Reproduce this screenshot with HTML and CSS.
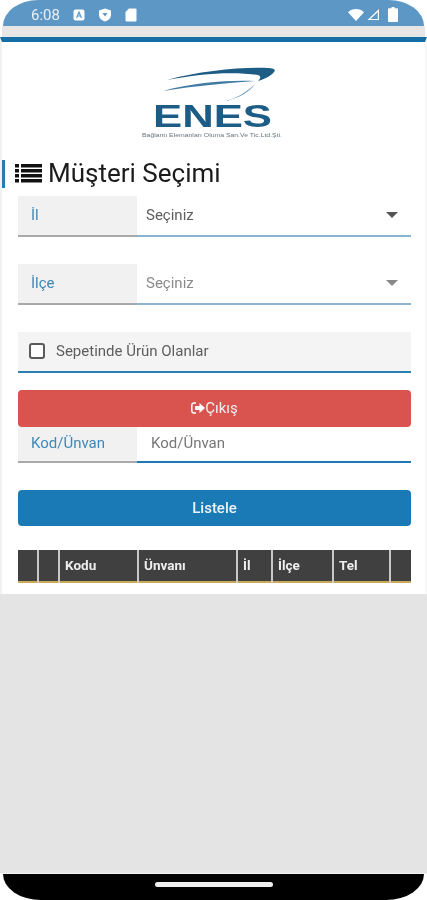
FILE: index.html
```html
<!DOCTYPE html>
<html lang="en">
<head>
    <meta charset="UTF-8">
    <meta name="viewport" content="width=device-width, initial-scale=1.0">
    <title>Müşteri Seçimi</title>
    <link rel="stylesheet" href="styles.css">
</head>
<body>
    <header class="status-bar">
        <span class="clock">6:08</span>
        <svg class="st-icon" width="12" height="12" viewBox="0 0 12 12"><rect x="0.5" y="0.5" width="11" height="11" rx="2" fill="#fff"/><path d="M3.6 9 6 3l2.4 6M4.5 7h3" fill="none" stroke="#5c97c6" stroke-width="1.2"/></svg>
        <svg class="st-icon" width="14" height="14" viewBox="0 0 14 14"><path d="M7 0.5 13 2.5v4.2c0 3.4-2.5 5.8-6 6.8-3.500-1-6-3.400-6-6.800V2.500z" fill="#fff"/><path d="M4.500 5h5L7 8.500z" fill="#5c97c6"/></svg>
        <svg class="st-icon" width="12" height="14" viewBox="0 0 12 14"><path d="M4 0.500h6.500a1 1 0 0 1 1 1v11a1 1 0 0 1-1 1h-9a1 1 0 0 1-1-1V4z" fill="#fff"/></svg>
        <span class="status-right">
            <svg width="16" height="12" viewBox="0 0 16 12"><path d="M0 3.200C4.500-1 11.500-1 16 3.200L8 12z" fill="#fff"/></svg>
            <svg width="14" height="13" viewBox="0 0 14 13"><path d="M13 1v11H1.500zM11.800 4 4.400 11h7.400z" fill="#fff" fill-rule="evenodd"/></svg>
            <svg class="battery" width="10" height="15" viewBox="0 0 10 15"><path d="M3.500 0h3v1.300H9a1 1 0 0 1 1 1V14a1 1 0 0 1-1 1H1a1 1 0 0 1-1-1V2.300a1 1 0 0 1 1-1h2.500z" fill="#fff"/></svg>
        </span>
    </header>
    <div class="app-strip"></div>

    <main class="content">
        <div class="logo">
            <svg width="146" height="74" viewBox="0 0 146 74">
                <path d="M27 15C60 6 100 2 128 3c6 0 8 2 6 4-3 4-9 7-16 9 3-3 3-5 0-6C90 6 60 9 27 15z" fill="#1d5c85"/>
                <path d="M23 26C55 17 90 15 115 16 85 18 55 21 23 26z" fill="#3f7ba3"/>
                <path d="M85 36c12-3 22-9 30-17-5 8-16 14-30 17z" fill="#6d9cbc"/>
                <text x="72.500" y="62" text-anchor="middle" class="logo-name" textLength="119" lengthAdjust="spacingAndGlyphs">ENES</text>
                <text x="72" y="72" text-anchor="middle" class="logo-sub" textLength="140" lengthAdjust="spacingAndGlyphs">Bağlantı Elemanları Oluma San.Ve Tic.Ltd.Şti.</text>
            </svg>
        </div>

        <h1 class="page-title">
            <svg width="27" height="21" viewBox="0 0 27 21"><path d="M0 1h4v3.500H0zM6 1h21v3.500H6zM0 6h4v3.500H0zM6 6h21v3.500H6zM0 11h4v3.500H0zM6 11h21v3.500H6zM0 16h4v3.500H0zM6 16h21v3.500H6z" fill="#111"/></svg>
            Müşteri Seçimi
        </h1>

        <div class="form">
            <div class="field field-select">
                <label class="field-label">İl</label>
                <div class="field-value dark">Seçiniz<span class="caret"></span></div>
            </div>
            <div class="field field-select">
                <label class="field-label">İlçe</label>
                <div class="field-value">Seçiniz<span class="caret light"></span></div>
            </div>
            <div class="check-row">
                <span class="check-box"></span>
                <span>Sepetinde Ürün Olanlar</span>
            </div>
            <button class="btn btn-red">
                <svg width="14" height="12" viewBox="0 0 14 12"><path d="M5 1H3a2.200 2.200 0 0 0-2.200 2.200v5.600A2.200 2.200 0 0 0 3 11h2" fill="none" stroke="#fff" stroke-width="1.500"/><path d="M4 4h4.500V1L14 6l-5.500 5V8H4z" fill="#fff"/></svg>Çıkış
            </button>
            <div class="field field-input">
                <label class="field-label">Kod/Ünvan</label>
                <div class="field-value input-hint">Kod/Ünvan</div>
            </div>
            <button class="btn btn-blue">Listele</button>
        </div>

        <table class="grid">
            <tr>
                <th class="c-first"></th>
                <th class="c-a"></th>
                <th class="c-kod">Kodu</th>
                <th class="c-unvan">Ünvanı</th>
                <th class="c-il">İl</th>
                <th class="c-ilce">İlçe</th>
                <th class="c-tel">Tel</th>
                <th></th>
            </tr>
        </table>
    </main>

    <div class="empty-area"></div>
    <footer class="nav-bar"><span class="home-pill"></span></footer>
</body>
</html>
```

FILE: styles.css
```css
html, body {
    margin: 0;
    background: #fff;
    font-family: Roboto, sans-serif;
}

body {
    display: flex;
    flex-direction: column;
    height: 900px;
    overflow: hidden;
    filter: blur(0.4px);
}

/* Status bar */
.status-bar {
    display: flex;
    align-items: center;
    gap: 13px;
    height: 26px;
    margin: 0 3px;
    padding: 3px 28px 0;
    box-sizing: border-box;
    background: #5c97c6;
    border-radius: 38px 38px 0 0 / 28px 28px 0 0;
    color: #e8f1f8;
}

.clock {
    font-size: 15px;
}

.status-right {
    margin-left: auto;
    display: flex;
    align-items: center;
    gap: 2px;
    margin-right: -2px;
}

.battery {
    margin-left: 6px;
}

.app-strip {
    height: 11px;
    margin: 0 2px;
    background: #e6e6e6;
}

/* Main */
.content {
    height: 557px;
    box-sizing: border-box;
    border-top: 5px solid #166ea6;
    border-left: 2px solid #f2f2f2;
    border-right: 2px solid #f8f8f8;
    background: #fff;
}

.logo {
    display: flex;
    justify-content: center;
    padding-top: 23px;
    height: 95px;
    margin-left: -1px;
}

.logo-name {
    font-family: "Liberation Sans", sans-serif;
    font-size: 31px;
    font-weight: bold;
    fill: #1d5c85;
}

.logo-sub {
    font-family: "Liberation Sans", sans-serif;
    font-size: 4.500px;
    fill: #66747e;
}

.page-title {
    display: flex;
    align-items: center;
    gap: 6px;
    height: 28px;
    margin: 0;
    padding: 0 0 2px 10px;
    box-sizing: border-box;
    border-left: 3px solid #2a7cb0;
    font-size: 26px;
    font-weight: 400;
    color: #1b1b1b;
}

.form {
    display: flex;
    flex-direction: column;
    margin: 8px 14px 0 16px;
}

.field {
    display: flex;
    font-size: 15px;
    box-sizing: border-box;
}

.field-select {
    height: 41px;
    margin-bottom: 27px;
    border-bottom: 2px solid #89b5d3;
}

.field-input {
    height: 36px;
    margin-bottom: 27px;
    border-bottom: 2px solid #2079b2;
}

.field-label {
    display: flex;
    align-items: center;
    width: 119px;
    margin-bottom: -2px;
    padding: 0 0 2px 13px;
    box-sizing: border-box;
    background: #f1f1f1;
    border-bottom: 2px solid #aaa;
    color: #3f87b8;
}

.field-value {
    flex: 1;
    display: flex;
    align-items: center;
    justify-content: space-between;
    padding: 0 13px 2px 9px;
    color: #8a8a8a;
}

.field-value.dark {
    color: #5e5e5e;
}

.input-hint {
    padding-left: 14px;
    color: #777;
}

.caret {
    border-top: 6px solid #555;
    border-left: 6.500px solid transparent;
    border-right: 6.500px solid transparent;
}

.caret.light {
    border-top-color: #888;
}

.check-row {
    display: flex;
    align-items: center;
    gap: 11px;
    height: 41px;
    margin-bottom: 17px;
    padding: 0 0 2px 11px;
    box-sizing: border-box;
    background: #f4f4f4;
    border-bottom: 2px solid #2c7fb3;
    font-size: 15px;
    color: #5e5e5e;
}

.check-box {
    width: 12px;
    height: 12px;
    border: 2px solid #5b5b5b;
    border-radius: 3px;
    background: #fff;
}

.btn {
    display: flex;
    align-items: center;
    justify-content: center;
    height: 36px;
    padding: 0;
    border: none;
    border-radius: 4px;
    font-family: Roboto, sans-serif;
    font-size: 15px;
    color: #edf2f5;
}

.btn-red {
    background: #d9534f;
    height: 37px;
    padding-bottom: 2px;
}

.btn-blue {
    background: #1a7ab5;
    font-weight: 500;
}

/* Table header */
.grid {
    width: 393px;
    margin: 24px 0 0 16px;
    border-collapse: collapse;
    table-layout: fixed;
    background: #404040;
    border-bottom: 2px solid #c9a95a;
}

.grid th {
    height: 32px;
    padding: 0 0 2px 5px;
    box-sizing: border-box;
    border-left: 2px solid #c8c8c8;
    font-size: 13.500px;
    font-weight: 700;
    text-align: left;
    color: #eee;
}

.grid th:first-child {
    border-left: none;
}

.c-first {
    width: 20px;
}

.c-a {
    width: 21px;
}

.c-kod {
    width: 79px;
}

.c-unvan {
    width: 99px;
}

.c-il {
    width: 35px;
}

.c-ilce {
    width: 61px;
}

.c-tel {
    width: 57px;
}

/* Bottom */
.empty-area {
    flex: 1;
    background: #e4e4e4;
    border-bottom: 1px solid #f2f2f2;
}

.nav-bar {
    display: flex;
    align-items: center;
    justify-content: center;
    height: 26px;
    margin: 0 3px;
    background: #000;
    border-radius: 0 0 38px 38px / 0 0 26px 26px;
}

.home-pill {
    width: 118px;
    height: 5px;
    margin-top: -5px;
    border-radius: 3px;
    background: #eee;
}
```
